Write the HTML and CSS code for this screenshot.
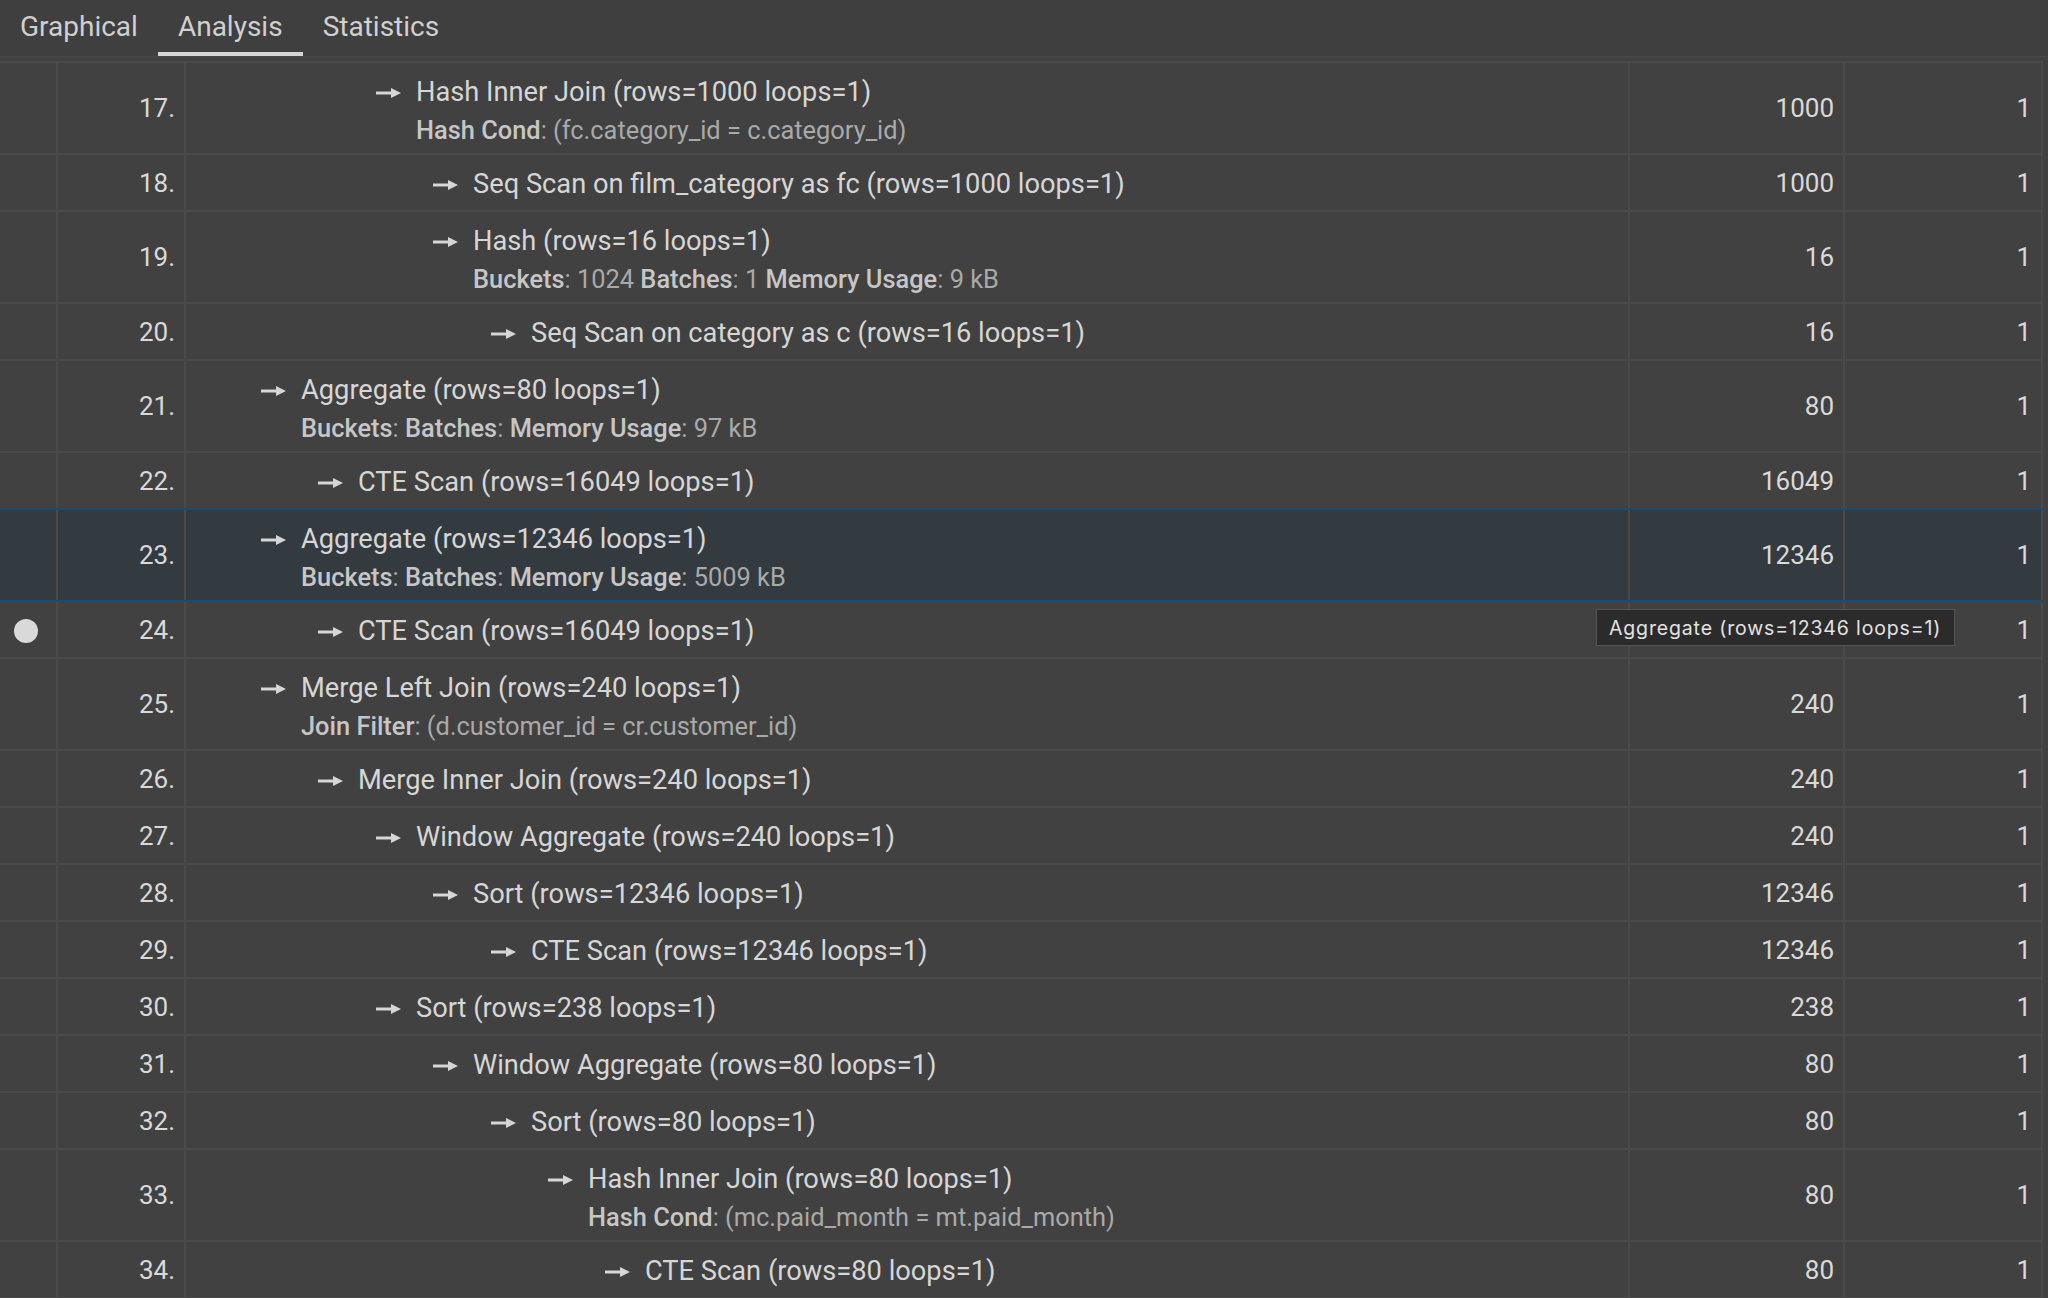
FILE: index.html
```html
<!DOCTYPE html>
<html>
<head>
<meta charset="utf-8">
<link rel="stylesheet" href="styles.css">
</head>
<body>
<div class="tabs">
  <div class="tab">Graphical</div>
  <div class="tab active">Analysis</div>
  <div class="tab">Statistics</div>
</div>
<div class="table">
  <div class="row double">
    <div class="c-mark"></div><div class="c-num">17.</div>
    <div class="c-plan l2"><div class="main"><svg class="arr" viewBox="0 0 25 12"><path d="M0 6h17"/><polygon points="15,1 25,6 15,11"/></svg>Hash Inner Join (rows=1000 loops=1)</div><div class="det"><b>Hash Cond</b>: (fc.category_id = c.category_id)</div></div>
    <div class="c-rows">1000</div><div class="c-loops">1</div>
  </div>
  <div class="row">
    <div class="c-mark"></div><div class="c-num">18.</div>
    <div class="c-plan l3"><div class="main"><svg class="arr" viewBox="0 0 25 12"><path d="M0 6h17"/><polygon points="15,1 25,6 15,11"/></svg>Seq Scan on film_category as fc (rows=1000 loops=1)</div></div>
    <div class="c-rows">1000</div><div class="c-loops">1</div>
  </div>
  <div class="row double">
    <div class="c-mark"></div><div class="c-num">19.</div>
    <div class="c-plan l3"><div class="main"><svg class="arr" viewBox="0 0 25 12"><path d="M0 6h17"/><polygon points="15,1 25,6 15,11"/></svg>Hash (rows=16 loops=1)</div><div class="det"><b>Buckets</b>: 1024 <b>Batches</b>: 1 <b>Memory Usage</b>: 9 kB</div></div>
    <div class="c-rows">16</div><div class="c-loops">1</div>
  </div>
  <div class="row">
    <div class="c-mark"></div><div class="c-num">20.</div>
    <div class="c-plan l4"><div class="main"><svg class="arr" viewBox="0 0 25 12"><path d="M0 6h17"/><polygon points="15,1 25,6 15,11"/></svg>Seq Scan on category as c (rows=16 loops=1)</div></div>
    <div class="c-rows">16</div><div class="c-loops">1</div>
  </div>
  <div class="row double">
    <div class="c-mark"></div><div class="c-num">21.</div>
    <div class="c-plan l0"><div class="main"><svg class="arr" viewBox="0 0 25 12"><path d="M0 6h17"/><polygon points="15,1 25,6 15,11"/></svg>Aggregate (rows=80 loops=1)</div><div class="det"><b>Buckets</b>: <b>Batches</b>: <b>Memory Usage</b>: 97 kB</div></div>
    <div class="c-rows">80</div><div class="c-loops">1</div>
  </div>
  <div class="row">
    <div class="c-mark"></div><div class="c-num">22.</div>
    <div class="c-plan l1"><div class="main"><svg class="arr" viewBox="0 0 25 12"><path d="M0 6h17"/><polygon points="15,1 25,6 15,11"/></svg>CTE Scan (rows=16049 loops=1)</div></div>
    <div class="c-rows">16049</div><div class="c-loops">1</div>
  </div>
  <div class="row double sel">
    <div class="c-mark"></div><div class="c-num">23.</div>
    <div class="c-plan l0"><div class="main"><svg class="arr" viewBox="0 0 25 12"><path d="M0 6h17"/><polygon points="15,1 25,6 15,11"/></svg>Aggregate (rows=12346 loops=1)</div><div class="det"><b>Buckets</b>: <b>Batches</b>: <b>Memory Usage</b>: 5009 kB</div></div>
    <div class="c-rows">12346</div><div class="c-loops">1</div>
  </div>
  <div class="row">
    <div class="c-mark"><span class="dot"></span></div><div class="c-num">24.</div>
    <div class="c-plan l1"><div class="main"><svg class="arr" viewBox="0 0 25 12"><path d="M0 6h17"/><polygon points="15,1 25,6 15,11"/></svg>CTE Scan (rows=16049 loops=1)</div></div>
    <div class="c-rows">16049</div><div class="c-loops">1</div>
  </div>
  <div class="row double">
    <div class="c-mark"></div><div class="c-num">25.</div>
    <div class="c-plan l0"><div class="main"><svg class="arr" viewBox="0 0 25 12"><path d="M0 6h17"/><polygon points="15,1 25,6 15,11"/></svg>Merge Left Join (rows=240 loops=1)</div><div class="det"><b>Join Filter</b>: (d.customer_id = cr.customer_id)</div></div>
    <div class="c-rows">240</div><div class="c-loops">1</div>
  </div>
  <div class="row">
    <div class="c-mark"></div><div class="c-num">26.</div>
    <div class="c-plan l1"><div class="main"><svg class="arr" viewBox="0 0 25 12"><path d="M0 6h17"/><polygon points="15,1 25,6 15,11"/></svg>Merge Inner Join (rows=240 loops=1)</div></div>
    <div class="c-rows">240</div><div class="c-loops">1</div>
  </div>
  <div class="row">
    <div class="c-mark"></div><div class="c-num">27.</div>
    <div class="c-plan l2"><div class="main"><svg class="arr" viewBox="0 0 25 12"><path d="M0 6h17"/><polygon points="15,1 25,6 15,11"/></svg>Window Aggregate (rows=240 loops=1)</div></div>
    <div class="c-rows">240</div><div class="c-loops">1</div>
  </div>
  <div class="row">
    <div class="c-mark"></div><div class="c-num">28.</div>
    <div class="c-plan l3"><div class="main"><svg class="arr" viewBox="0 0 25 12"><path d="M0 6h17"/><polygon points="15,1 25,6 15,11"/></svg>Sort (rows=12346 loops=1)</div></div>
    <div class="c-rows">12346</div><div class="c-loops">1</div>
  </div>
  <div class="row">
    <div class="c-mark"></div><div class="c-num">29.</div>
    <div class="c-plan l4"><div class="main"><svg class="arr" viewBox="0 0 25 12"><path d="M0 6h17"/><polygon points="15,1 25,6 15,11"/></svg>CTE Scan (rows=12346 loops=1)</div></div>
    <div class="c-rows">12346</div><div class="c-loops">1</div>
  </div>
  <div class="row">
    <div class="c-mark"></div><div class="c-num">30.</div>
    <div class="c-plan l2"><div class="main"><svg class="arr" viewBox="0 0 25 12"><path d="M0 6h17"/><polygon points="15,1 25,6 15,11"/></svg>Sort (rows=238 loops=1)</div></div>
    <div class="c-rows">238</div><div class="c-loops">1</div>
  </div>
  <div class="row">
    <div class="c-mark"></div><div class="c-num">31.</div>
    <div class="c-plan l3"><div class="main"><svg class="arr" viewBox="0 0 25 12"><path d="M0 6h17"/><polygon points="15,1 25,6 15,11"/></svg>Window Aggregate (rows=80 loops=1)</div></div>
    <div class="c-rows">80</div><div class="c-loops">1</div>
  </div>
  <div class="row">
    <div class="c-mark"></div><div class="c-num">32.</div>
    <div class="c-plan l4"><div class="main"><svg class="arr" viewBox="0 0 25 12"><path d="M0 6h17"/><polygon points="15,1 25,6 15,11"/></svg>Sort (rows=80 loops=1)</div></div>
    <div class="c-rows">80</div><div class="c-loops">1</div>
  </div>
  <div class="row double">
    <div class="c-mark"></div><div class="c-num">33.</div>
    <div class="c-plan l5"><div class="main"><svg class="arr" viewBox="0 0 25 12"><path d="M0 6h17"/><polygon points="15,1 25,6 15,11"/></svg>Hash Inner Join (rows=80 loops=1)</div><div class="det"><b>Hash Cond</b>: (mc.paid_month = mt.paid_month)</div></div>
    <div class="c-rows">80</div><div class="c-loops">1</div>
  </div>
  <div class="row">
    <div class="c-mark"></div><div class="c-num">34.</div>
    <div class="c-plan l6"><div class="main"><svg class="arr" viewBox="0 0 25 12"><path d="M0 6h17"/><polygon points="15,1 25,6 15,11"/></svg>CTE Scan (rows=80 loops=1)</div></div>
    <div class="c-rows">80</div><div class="c-loops">1</div>
  </div>
</div>
<div class="tooltip">Aggregate (rows=12346 loops=1)</div>
</body>
</html>
```
FILE: styles.css
```css
html, body {
  margin: 0;
  padding: 0;
}
body {
  width: 2048px;
  height: 1298px;
  overflow: hidden;
  background: #414141;
  font-family: Roboto, "Noto Sans", sans-serif;
  color: #d6d6d6;
  position: relative;
}
.tabs {
  display: flex;
  height: 56px;
  border-bottom: 1px solid #4a4a4a;
  background: #3f3f3f;
}
.tab {
  padding: 2px 20px 0;
  font-size: 28px;
  line-height: 50px;
  color: #d0d0d0;
  border-bottom: 4px solid transparent;
}
.tab.active {
  border-bottom-color: #d6d6d6;
}
.table {
  margin-top: 4px;
  width: 2043px;
  border-top: 2px solid #4a4a4a;
}
.row {
  display: grid;
  grid-template-columns: 58px 128px 1444px 215px 198px;
  border-bottom: 2px solid #4a4a4a;
}
.row:has(+ .sel) {
  border-bottom-color: #1f4b70;
}
.row.sel {
  background: #333b41;
  border-bottom-color: #1f4b70;
}
.row > div {
  border-right: 2px solid #4a4a4a;
}
.c-mark {
  display: flex;
  align-items: center;
  justify-content: center;
}
.dot {
  width: 24px;
  height: 24px;
  border-radius: 50%;
  background: #d9d9d9;
  margin-left: -4px;
  margin-top: 3px;
}
.c-num, .c-rows, .c-loops {
  display: flex;
  align-items: center;
  justify-content: flex-end;
  font-size: 26px;
  color: #d9d9d9;
  padding-right: 9px;
}
.c-loops {
  padding-right: 10px;
}
.c-plan {
  padding: 14px 0 11px;
}
.double .c-plan {
  padding-bottom: 8px;
}
.main {
  font-size: 27.25px;
  line-height: 30px;
  display: flex;
  align-items: center;
  white-space: nowrap;
}
.arr {
  width: 25px;
  height: 12px;
  margin-right: 15px;
  flex: none;
  position: relative;
  top: 1px;
}
.arr path {
  stroke: #d6d6d6;
  stroke-width: 3;
  fill: none;
}
.arr polygon {
  fill: #d6d6d6;
}
.det {
  font-size: 25.4px;
  line-height: 30px;
  margin-top: 8px;
  margin-left: 40px;
  color: #a9a9a9;
  white-space: nowrap;
}
.det b {
  font-weight: 500;
  color: #c6c6c6;
}
.l0 { padding-left: 75px; }
.l1 { padding-left: 132px; }
.l2 { padding-left: 190px; }
.l3 { padding-left: 247px; }
.l4 { padding-left: 305px; }
.l5 { padding-left: 362px; }
.l6 { padding-left: 419px; }
.tooltip {
  position: absolute;
  left: 1596px;
  top: 609px;
  width: 357px;
  height: 35px;
  box-sizing: content-box;
  background: #2b2b2b;
  border: 1px solid #555555;
  color: #e2e2e2;
  font-family: Inter, "Liberation Sans", sans-serif;
  font-size: 19.5px;
  letter-spacing: 0.85px;
  line-height: 36px;
  padding: 0;
  text-indent: 12px;
  white-space: nowrap;
}
```
